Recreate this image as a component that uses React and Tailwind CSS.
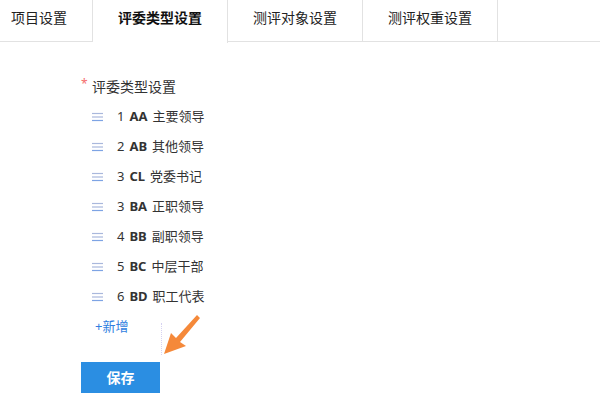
import React from "react";

const tabs = [
  { label: "项目设置", w: "w-[93px] pl-[11px] text-left" },
  { label: "评委类型设置", w: "w-[135px] text-center", active: true },
  { label: "测评对象设置", w: "w-[135px] text-center" },
  { label: "测评权重设置", w: "w-[135px] text-center" },
];

const judges = [
  { no: 1, code: "AA", name: "主要领导" },
  { no: 2, code: "AB", name: "其他领导" },
  { no: 3, code: "CL", name: "党委书记" },
  { no: 3, code: "BA", name: "正职领导" },
  { no: 4, code: "BB", name: "副职领导" },
  { no: 5, code: "BC", name: "中层干部" },
  { no: 6, code: "BD", name: "职工代表" },
];

const DragIcon = () => (
  <svg width="11" height="10" viewBox="0 0 11 10" className="shrink-0">
    <line x1="0" y1="1.5" x2="11" y2="1.5" stroke="#a9b8dc" strokeWidth="1.2" />
    <line x1="0" y1="5" x2="11" y2="5" stroke="#a9b8dc" strokeWidth="1.2" />
    <line x1="0" y1="8.5" x2="11" y2="8.5" stroke="#7ea4e4" strokeWidth="1.2" />
  </svg>
);

const App = () => {
  return (
    <div
      className="relative w-[600px] h-[400px] bg-white text-[#333] overflow-hidden"
      style={{ fontFamily: '"Noto Sans", "Noto Sans CJK SC", sans-serif' }}
    >
      {/* Tabs */}
      <div className="flex h-[42px] border-b border-[#e2e2e2]">
        {tabs.map((t) => (
          <div
            key={t.label}
            className={`${t.w} h-[42px] leading-[35px] text-[14px] border-r border-[#e2e2e2] ${
              t.active ? "font-bold text-[#111] bg-white -mb-px h-[43px]" : "text-[#222]"
            }`}
          >
            {t.label}
          </div>
        ))}
      </div>

      {/* Form */}
      <div className="pl-[81px] pt-[34px]">
        <div className="flex items-center h-[20px] text-[14px]">
          <span className="text-[#f56c6c] w-[11px] text-[12px] -mt-[4px]">*</span>
          <span>评委类型设置</span>
        </div>

        <div className="flex flex-col mt-[6px]">
          {judges.map((j) => (
            <div key={j.code} className="flex items-center h-[30px] pl-[11px] text-[13px]">
              <DragIcon />
              <span className="ml-[14px]">{j.no}</span>
              <span className="ml-[5px] font-bold">{j.code}</span>
              <span className="ml-[5px]">{j.name}</span>
            </div>
          ))}
        </div>

        <div className="flex items-center h-[30px] pl-[14px] text-[13px] text-[#2f7ee0]">
          +新增
        </div>

        <button className="mt-[20px] w-[79px] h-[31px] bg-[#2b8ee2] text-white text-[14px] font-bold">
          保存
        </button>
      </div>

      {/* dotted guide + arrow overlay */}
      <div className="absolute left-[161px] top-[323px] h-[32px] border-l border-dotted border-[#d6d2f2]" />
      <svg className="absolute left-[160px] top-[314px]" width="46" height="44" viewBox="0 0 46 44">
        <path d="M40 4 L20 28 L26 32 L4 40 L11 19 L16 24 L37 1 Z" fill="#f5893a" />
      </svg>
    </div>
  );
};

export default App;
